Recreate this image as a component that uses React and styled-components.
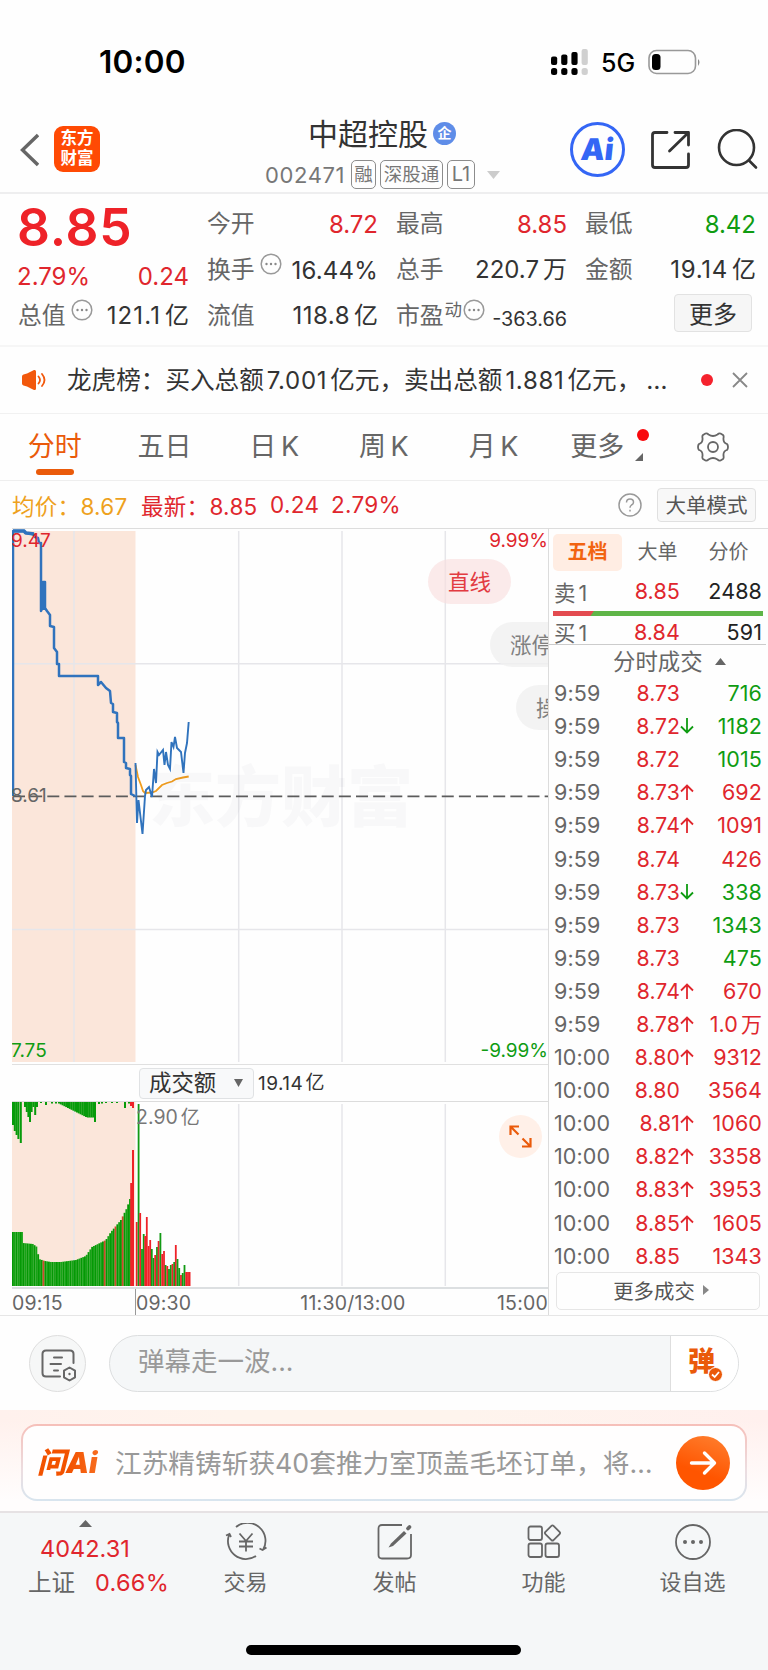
import React from 'react'
import styled, { createGlobalStyle } from 'styled-components'

const RED = '#e0262d';
const GREEN = '#0f9c12';
const GREY = '#666666';
const DARK = '#333333';
const ORANGE = '#ea5a0a';

const GlobalStyle = createGlobalStyle`
  * {
    box-sizing: border-box;
  }
  body {
    margin: 0;
    background: #ffffff;
    font-family: Inter, 'Noto Sans CJK SC', sans-serif;
    color: ${DARK};
  }
  svg {
    display: block;
    flex: none;
  }
`;

const Page = styled.div`
  width: 768px;
  height: 1670px;
  display: flex;
  flex-direction: column;
  overflow: hidden;
  background: #fefefe;
  white-space: nowrap;
`;

const Txt = styled.span`
  font-size: ${p => p.$size || 24}px;
  line-height: ${p => p.$lh || '1.2'};
  font-weight: ${p => p.$weight || 400};
  color: ${p => p.$color || 'inherit'};
  letter-spacing: ${p => p.$ls || 0}px;
  margin-left: ${p => p.$ml || 0}px;
`;

/* status bar */
const StatusBar = styled.div`
  height: 107px;
  padding: 16px 67px 0 99px;
  display: flex;
  align-items: center;
  justify-content: space-between;
  color: #000000;
`;
const StatusIcons = styled.div`
  display: flex;
  align-items: center;
`;
const FiveG = styled.span`
  font-size: 25px;
  font-weight: 500;
  margin: 2px 12px 0 13px;
  width: 35px;
`;

/* title bar */
const Header = styled.div`
  height: 87px;
  padding: 0 10px 0 19px;
  display: flex;
  align-items: center;
  border-bottom: 2px solid #eeeeef;
`;
const Logo = styled.div`
  width: 46px;
  height: 46px;
  margin: 0 0 1px 15px;
  padding-top: 3px;
  border-radius: 9px;
  background: #ff4a04;
  color: #ffffff;
  font-size: 16.5px;
  font-weight: 700;
  line-height: 19.5px;
  text-align: center;
`;
const Titles = styled.div`
  width: 240px;
  margin-left: 165px;
  height: 80px;
`;
const NameRow = styled.div`
  display: flex;
  align-items: center;
  height: 36px;
  margin-top: 6px;
  padding-left: 43px;
  font-size: 30px;
  line-height: 36px;
`;
const Badge = styled.span`
  width: 23px;
  height: 23px;
  margin-left: 5px;
  border-radius: 50%;
  background: #5f8de8;
  color: #ffffff;
  font-size: 14px;
  font-weight: 700;
  line-height: 22px;
  text-align: center;
`;
const CodeRow = styled.div`
  display: flex;
  align-items: center;
  height: 30px;
  margin-top: 8px;
  color: #777777;
  svg {
    margin-left: 8px;
  }
`;
const Code = styled.span`
  width: 86px;
  font-size: 22px;
  letter-spacing: 0.6px;
`;
const Tag = styled.span`
  height: 29px;
  width: ${p => p.$w}px;
  margin-right: 4px;
  border: 1.5px solid #8c8c8c;
  border-radius: 5px;
  font-size: ${p => p.$size || 18.5}px;
  line-height: 26px;
  text-align: center;
`;
const AiLogo = styled.div`
  width: 55px;
  height: 55px;
  margin: 0 25px 0 65px;
  border: 3px solid #3466f5;
  border-radius: 50%;
  color: #3466f5;
  font-size: 30px;
  font-weight: 900;
  line-height: 49px;
  text-align: center;
  span {
    display: block;
    transform: skewX(-6deg);
  }
`;

/* quote numbers */
const Quotes = styled.div`
  height: 153px;
  padding: 7px 13px 0 18px;
  display: grid;
  grid-template-columns: repeat(4, 170px);
  column-gap: 19px;
  border-bottom: 2px solid #f6f6f6;
`;
const QuoteCol = styled.div`
  display: flex;
  flex-direction: column;
`;
const QuoteRow = styled.div`
  height: 46px;
  display: flex;
  align-items: center;
  justify-content: ${p => p.$end ? 'flex-end' : 'space-between'};
`;
const Label = styled.span`
  display: flex;
  align-items: flex-start;
  color: ${GREY};
  font-size: 23.8px;
  line-height: 34px;
`;
const Super = styled.sup`
  font-size: 17.5px;
  line-height: 20px;
  margin: 1px 1px 0 1px;
`;
const Value = styled.span`
  color: ${p => p.$color || DARK};
  font-size: ${p => p.$size || 24}px;
  letter-spacing: ${p => p.$ls || 0}px;
  padding-top: ${p => p.$drop || 0}px;
  margin-right: -1px;
`;
const BigPrice = styled.div`
  height: 55px;
  margin-left: -1px;
  color: #ee2228;
  font-size: 51.5px;
  font-weight: 600;
  line-height: 53px;
  letter-spacing: 0.8px;
`;
const ChangeRow = styled.div`
  height: 37px;
  margin-left: -1px;
  padding-top: 3px;
  display: flex;
  justify-content: space-between;
  align-items: center;
`;
const MoreButton = styled.button`
  width: 78px;
  height: 38px;
  margin: 0 3px 6px 0;
  padding: 0 0 3px;
  border: 1.5px solid #e2e2e2;
  border-radius: 4px;
  background: #f6f6f6;
  color: ${DARK};
  font: 24px Inter, 'Noto Sans CJK SC', sans-serif;
`;

/* news strip */
const News = styled.div`
  height: 67px;
  padding: 0 20px 0 21px;
  display: flex;
  align-items: center;
  border-bottom: 1px solid #f1f1f1;
`;
const NewsText = styled.div`
  width: 612px;
  margin-left: 20px;
  font-size: 24.6px;
  line-height: 34px;
  b {
    font-weight: 400;
    margin: 0 3px;
    font-size: 24px;
    letter-spacing: 0.7px;
  }
  i {
    font-style: normal;
    letter-spacing: 1px;
    margin-left: 5px;
  }
`;
const Dot = styled.i`
  display: block;
  width: 12px;
  height: 12px;
  border-radius: 50%;
  background: #f5222d;
`;

/* period tabs */
const Tabs = styled.div`
  height: 67px;
  display: grid;
  grid-template-columns: repeat(6, 109.7px) 1fr;
  border-bottom: 1px solid #eeeeee;
`;
const Tab = styled.div`
  position: relative;
  display: flex;
  justify-content: center;
  padding: 14px ${p => p.$shift || 0}px 0 0;
  color: ${p => p.$active ? ORANGE : GREY};
  font-size: 27px;
  line-height: 38px;
  word-spacing: -3px;
  &::after {
    content: '';
    display: ${p => p.$active ? 'block' : 'none'};
    position: absolute;
    bottom: 5px;
    left: 36px;
    width: 38px;
    height: 6px;
    border-radius: 3px;
    background: ${ORANGE};
  }
`;
const TabMark = styled.span`
  position: absolute;
  left: 87px;
  top: 15px;
`;
const GearCell = styled.div`
  display: flex;
  align-items: center;
  justify-content: center;
`;

/* average / last price line */
const Info = styled.div`
  height: 47px;
  padding: 0 12px;
  display: flex;
  align-items: center;
  font-size: 22.5px;
  letter-spacing: 0.3px;
  color: ${RED};
`;
const Avg = styled.span`
  color: #eea11d;
  width: 129px;
`;
const InfoText = styled.span`
  width: ${p => p.$w}px;
`;
const Spacer = styled.span`
  flex: 1;
`;
const ModeButton = styled.button`
  width: 99px;
  height: 34px;
  margin-left: 15px;
  padding: 0 0 2px;
  border: 1.5px solid #e0e0e0;
  border-radius: 4px;
  background: #f8f8f8;
  color: #555555;
  font: 20.5px 'Noto Sans CJK SC', sans-serif;
`;

/* chart + order book */
const Body = styled.div`
  height: 788px;
  display: flex;
  border-bottom: 1px solid #e6e6e6;
`;
const ChartSide = styled.div`
  width: 549px;
  padding-left: 12px;
  border-right: 1px solid #dcdcdc;
`;
const PriceChart = styled.div`
  position: relative;
  height: 536px;
  border-top: 1px solid #dddddd;
  overflow: hidden;
`;
const ChartLabel = styled.span`
  position: absolute;
  ${p => p.$right ? 'right: 0' : 'left: -1px'};
  top: ${p => p.$top}px;
  color: ${p => p.$color};
  font-size: 19px;
  line-height: 22px;
`;
const Watermark = styled.span`
  position: absolute;
  left: 137px;
  top: 223px;
  color: rgba(90, 90, 120, 0.04);
  font-size: 66px;
  font-weight: 900;
  line-height: 90px;
`;
const Pill = styled.span`
  position: absolute;
  left: ${p => p.$x}px;
  top: ${p => p.$y}px;
  height: 45px;
  padding: 0 20px;
  border-radius: 23px;
  background: ${p => p.$hot ? 'rgba(249, 222, 222, 0.65)' : 'rgba(240, 240, 240, 0.8)'};
  color: ${p => p.$hot ? '#e23b41' : '#808080'};
  font-size: 21.5px;
  line-height: 46px;
`;
const VolumeHead = styled.div`
  height: 38px;
  display: flex;
  align-items: center;
  padding-left: 127px;
  border-top: 1px solid #e0e0e0;
  border-bottom: 1.5px solid #dcdcdc;
  font-size: 19px;
  letter-spacing: 0.5px;
`;
const VolumeButton = styled.div`
  width: 115px;
  height: 31px;
  margin-right: 4px;
  padding: 0 10px 1px 9px;
  display: flex;
  align-items: center;
  justify-content: space-between;
  border: 1.5px solid #e0e2e4;
  border-radius: 4px;
  background: #f8f9fa;
  font-size: 22.4px;
  line-height: 28px;
  letter-spacing: 0;
`;
const VolumeChart = styled.div`
  position: relative;
  height: 185px;
`;
const VolumeMax = styled.span`
  position: absolute;
  left: 124px;
  top: 2px;
  color: #777777;
  font-size: 19.5px;
  line-height: 26px;
`;
const Expand = styled.div`
  position: absolute;
  right: 6px;
  top: 13px;
  width: 43px;
  height: 43px;
  padding: 10px;
  border-radius: 50%;
  background: #fff0e8;
`;
const TimeAxis = styled.div`
  height: 28px;
  display: flex;
  border-top: 2px solid #dcdfe1;
  color: ${GREY};
  font-size: 19.5px;
  line-height: 28px;
  letter-spacing: 0.2px;
`;
const Tick = styled.span`
  width: ${p => p.$w}px;
  text-align: ${p => p.$align || 'left'};
  border-left: ${p => p.$mark ? '1px solid #999999' : 'none'};
`;

const Book = styled.div`
  flex: 1;
  padding: 5px 7px 0 4px;
  border-top: 1px solid #dddddd;
  display: flex;
  flex-direction: column;
`;
const BookTabs = styled.div`
  display: flex;
  height: 37px;
  margin-right: -2px;
`;
const BookTab = styled.span`
  width: ${p => p.$active ? 69 : 71}px;
  text-align: center;
  border-radius: 5px;
  font-size: 20px;
  line-height: 36px;
  font-weight: ${p => p.$active ? 700 : 400};
  color: ${p => p.$active ? '#f26411' : GREY};
  background: ${p => p.$active ? '#ffede3' : 'none'};
`;
const BookRow = styled.div`
  height: ${p => p.$h}px;
  padding: 0 1px ${p => p.$up || 0}px 1px;
  display: grid;
  grid-template-columns: 69px 57px 14px 1fr;
  align-items: center;
  flex: none;
  font-size: 21.5px;
  color: ${GREY};
  letter-spacing: 0.1px;
`;
const Cell = styled.span`
  text-align: right;
  white-space: nowrap;
  justify-self: end;
  color: ${p => p.$color};
  font-size: ${p => p.$size || 21.5}px;
`;
const Ratio = styled.div`
  width: 210px;
  height: 5px;
  flex: none;
  background: linear-gradient(125deg, #e34b50 0 33px, #5fb548 34px);
`;
const DealTitle = styled.div`
  height: 33px;
  margin: 0 -3px 0 -4px;
  padding: 1px 0 0 64px;
  display: flex;
  align-items: center;
  gap: 12px;
  flex: none;
  border-top: 1.5px solid #cccccc;
  color: ${GREY};
  font-size: 22.4px;
  line-height: 31px;
`;
const MoreDeals = styled.div`
  width: 204px;
  height: 38px;
  margin: -1px 0 0 3px;
  padding: 0 0 2px 6px;
  display: flex;
  align-items: center;
  justify-content: center;
  gap: 8px;
  border: 1.5px solid #e6e6e6;
  border-radius: 5px;
  color: #555555;
  font-size: 20.4px;
`;

/* comment bar */
const CommentBar = styled.div`
  height: 94px;
  padding: 1px 29px 0;
  display: flex;
  align-items: center;
  justify-content: space-between;
`;
const RoundButton = styled.div`
  width: 57px;
  height: 57px;
  padding: 11px;
  border: 1px solid #dedede;
  border-radius: 50%;
  background: #f6f7f7;
`;
const Input = styled.div`
  width: 630px;
  height: 57px;
  display: flex;
  overflow: hidden;
  border: 1px solid #dcdedf;
  border-radius: 29px;
  background: #f5f7f8;
`;
const Placeholder = styled.span`
  flex: 1;
  padding-left: 28px;
  color: #999999;
  font-size: 26.5px;
  line-height: 51px;
`;
const Danmu = styled.span`
  position: relative;
  width: 68px;
  padding-left: 17px;
  border-left: 1.5px solid #dedede;
  background: #ffffff;
  color: ${ORANGE};
  font-size: 27px;
  font-weight: 900;
  line-height: 52px;
  svg {
    position: absolute;
    left: 37px;
    top: 31px;
  }
`;

/* ask ai */
const AskArea = styled.div`
  height: 101px;
  padding: 14px 21px 0;
  background: linear-gradient(180deg, rgba(255, 254, 254, 0) 10%, #fffdfd 90%),
    linear-gradient(90deg, #fff1ed, #fef4ed 30%, #fef4ed 60%, #fff0ee);
`;
const AskCard = styled.div`
  height: 77px;
  padding: 0 15px 0 14px;
  display: flex;
  align-items: center;
  border: 2px solid transparent;
  border-radius: 16px;
  background: linear-gradient(#fffefe, #fffefe) padding-box,
    linear-gradient(180deg, #f6bfb9, #ecdde0 60%, #d8e5ef) border-box;
`;
const AskLogo = styled.span`
  width: 78px;
  font-size: 29px;
  font-weight: 900;
  font-style: italic;
  line-height: 40px;
  background: linear-gradient(90deg, #f25200 40%, #fb7b2f);
  -webkit-background-clip: text;
  color: transparent;
`;
const AskText = styled.span`
  flex: 1;
  color: #999999;
  font-size: 26.7px;
  line-height: 40px;
`;
const GoButton = styled.span`
  width: 54px;
  height: 54px;
  padding: 13px;
  border-radius: 50%;
  background: linear-gradient(200deg, #ff8131, #ff5500 65%);
`;

/* bottom navigation */
const BottomNav = styled.div`
  flex: 1;
  border-top: 2px solid #e6e2e4;
  background: #f5f7f8;
`;
const NavRow = styled.div`
  height: 133px;
  display: grid;
  grid-template-columns: 171px repeat(4, 149px);
`;
const IndexCell = styled.div`
  padding-top: 7px;
  color: ${RED};
  font-size: 23.5px;
  svg {
    margin-left: 79px;
  }
`;
const IndexValue = styled.div`
  margin: 8px 0 0 40px;
  line-height: 28px;
`;
const IndexRow = styled.div`
  display: flex;
  gap: 20px;
  padding-left: 28px;
  line-height: 40px;
  letter-spacing: 0.3px;
`;
const NavItem = styled.div`
  padding-top: 10px;
  display: flex;
  flex-direction: column;
  align-items: center;
  color: ${GREY};
  font-size: 22px;
  line-height: 32px;
  svg {
    margin-bottom: 5px;
  }
`;
const HomeBar = styled.div`
  width: 275px;
  height: 10px;
  margin: -1px 0 0 246px;
  border-radius: 5px;
  background: #000000;
`;

const Unit = ({ children }) => <Txt $size={24} $ml={4}>{children}</Txt>

function DotsIcon() {
    return (
        <svg width="22" height="22" viewBox="0 0 22 22">
            <circle cx="11" cy="11" r="9.8" fill="none" stroke="#999" strokeWidth="1.5" />
            <circle cx="6.5" cy="11" r="1.2" fill="#888" />
            <circle cx="11" cy="11" r="1.2" fill="#888" />
            <circle cx="15.5" cy="11" r="1.2" fill="#888" />
        </svg>
    )
}

const priceLine = '13,796 13,531 24,531 25,533 33,534 35,537 38,538 39,543 41,543 41,611 43,607 43,582 45,582 45,608 47,611 50,615 50,626 54,627 54,648 57,652 57,664 59,664 59,676 98,676 98,685 101,682 106,688 110,691 111,703 113,704 113,712 117,713 117,722 118,723 118,738 124,738 124,762 126,763 126,768 130,769 130,775 131,776 131,794 135,796'
const openLine = '135.5,763 137,823 138.5,800 142.5,834 145,796 146,790 149,787 152,797 154,769 156,783 157.5,752 159,755 163,750 164.5,765 166,752 168,765 170,769 171.5,742 173.5,747 175,737 177,748 181,752 183.5,773 185,753 187,743 188.7,722'
const avgLine = '135.5,765 138,777 141,785 143,791 145,793 152,792.5 156,791 162,785 167,783 172,781.5 176,779 183,777.5 188.7,776.5'

// [x, top] outline of the call-auction turnover
const auction = [[12, 1232], [21, 1232], [22, 1243], [32, 1244], [36, 1247], [38, 1259], [44, 1261], [50, 1262], [60, 1262], [75, 1260], [85, 1256], [91, 1247], [105, 1240], [110, 1232], [120, 1220], [126, 1208], [130, 1196]]
const auctionTop = [[13, 1125], [14.8, 1131], [16.6, 1135], [18.4, 1139], [20.8, 1143], [25, 1107], [26.8, 1112], [28.4, 1117], [30, 1122], [31.6, 1112], [33.4, 1107], [35.2, 1115], [37, 1107], [41, 1103], [46, 1105], [52, 1103.5], [56, 1103.5], [95, 1122], [99, 1104], [102, 1103.5], [106, 1103], [112, 1103], [117, 1103], [125, 1108], [129, 1103.5]]
const trades = [[136.7, 1222, 1], [138.6, 1104, 0], [140.2, 1213, 1], [142, 1249, 0], [143.7, 1234, 0], [145.2, 1236, 1], [146.8, 1217, 1], [148.6, 1246, 1], [150.2, 1240, 1], [151.8, 1249, 0], [153.5, 1258, 0], [155.2, 1255, 1], [157, 1247, 0], [158.6, 1241, 1], [160.4, 1233, 0], [162.2, 1254, 1], [164, 1251, 1], [165.6, 1265, 0], [167.3, 1266, 1], [169, 1269, 0], [170.8, 1265, 0], [172.5, 1264, 1], [174.2, 1262, 0], [175.8, 1245, 1], [177.5, 1259, 0], [179.2, 1268, 0], [181, 1275, 1], [182.7, 1273, 0], [184.5, 1265, 0], [186.2, 1272, 1], [188, 1272, 1], [189.6, 1272, 1]]
const redAuction = [17, 51, 57, 61]

function topAt(x) {
    const i = auction.findIndex(p => p[0] > x)
    if (i < 1) return 1196
    const [a, b] = [auction[i - 1], auction[i]]
    return a[1] + ((b[1] - a[1]) * (x - a[0])) / (b[0] - a[0])
}

function Grid({ top, bottom }) {
    return (
        <g stroke="#e6e6ea" strokeWidth="1.5">
            {[74, 238.7, 342, 445.3].map(x => <line key={x} x1={x} x2={x} y1={top} y2={bottom} />)}
        </g>
    )
}

function PriceSvg() {
    return (
        <svg width="536" height="535" viewBox="12 529 536 535">
            <rect x="12" y="531" width="123.5" height="531" fill="#fbe6da" />
            <Grid top={531} bottom={1062} />
            <path d="M12 663.7H548M12 929.5H548" stroke="#e6e6ea" strokeWidth="1.5" />
            <path d="M12 796.3H548" stroke="#5c5c5c" strokeWidth="1.7" strokeDasharray="12 5.15" strokeDashoffset="-1" />
            <polyline points={avgLine} fill="none" stroke="#f09c1c" strokeWidth="1.8" />
            <polyline points={priceLine} fill="none" stroke="#3073bd" strokeWidth="2.5" strokeLinejoin="round" />
            <polyline points="13,531 24,531 26,533 34,534" fill="none" stroke="#3073bd" strokeWidth="3.4" />
            <path d="M43.5 583V610" stroke="#3073bd" strokeWidth="3.4" />
            <polyline points={openLine} fill="none" stroke="#3073bd" strokeWidth="1.9" />
        </svg>
    )
}

function VolumeSvg() {
    const bars = Array.from({ length: 66 }, (_, i) => 12 + i * 1.8)
    const hanging = Array.from({ length: 20 }, (_, i) => [59 + i * 1.8, 1103.5 + Math.min(14, i * 0.9)])
    return (
        <svg width="536" height="185" viewBox="12 1102 536 185">
            <rect x="12" y="1102" width="123.5" height="184" fill="#fbe6da" />
            <Grid top={1104} bottom={1286} />
            {bars.map((x, i) => (
                <rect key={x} x={x} y={topAt(x)} width="1.9" height={1286 - topAt(x)} fill={redAuction.includes(i) ? '#cf4a2c' : i % 2 ? '#16a316' : '#059805'} />
            ))}
            {[...auctionTop, ...hanging].map(([x, y]) => (
                <rect key={x} x={x - 1} y="1102" width="2" height={y - 1102} fill="#079b0b" />
            ))}
            <path d="M130.2 1183h2v103h-2zM132 1150h2v136h-2zM130 1102h2v4h-2zM132 1102h2v6h-2z" fill="#ee2228" />
            {trades.map(([x, y, up]) => (
                <rect key={x} x={x - 0.9} y={y} width="1.8" height={1286 - y} fill={up ? '#ee2228' : '#129a14'} />
            ))}
        </svg>
    )
}

const deals = [
    ['9:59', '8.73', '', '716', GREEN],
    ['9:59', '8.72', '↓', '1182', GREEN],
    ['9:59', '8.72', '', '1015', GREEN],
    ['9:59', '8.73', '↑', '692', RED],
    ['9:59', '8.74', '↑', '1091', RED],
    ['9:59', '8.74', '', '426', RED],
    ['9:59', '8.73', '↓', '338', GREEN],
    ['9:59', '8.73', '', '1343', GREEN],
    ['9:59', '8.73', '', '475', GREEN],
    ['9:59', '8.74', '↑', '670', RED],
    ['9:59', '8.78', '↑', <>1.0<Txt $size={21} $lh="1" $ml={3}>万</Txt></>, RED],
    ['10:00', '8.80', '↑', '9312', RED],
    ['10:00', '8.80', '', '3564', RED],
    ['10:00', '8.81', '↑', '1060', RED],
    ['10:00', '8.82', '↑', '3358', RED],
    ['10:00', '8.83', '↑', '3953', RED],
    ['10:00', '8.85', '↑', '1605', RED],
    ['10:00', '8.85', '', '1343', RED],
]

function Arrow({ dir }) {
    if (!dir) return <span />
    const up = dir === '↑'
    return (
        <svg width="14" height="18" viewBox="0 0 14 18" fill="none" stroke={up ? RED : GREEN} strokeWidth="1.8">
            <path d={up ? 'M7 17V3M1 8.5L7 2.5L13 8.5' : 'M7 1V15M1 9.5L7 15.5L13 9.5'} />
        </svg>
    )
}

function TopBar() {
    return (
        <>
            <StatusBar>
                <Txt $size={31.5} $weight={600} $ls={0.2}>10:00</Txt>
                <StatusIcons>
                    <svg width="38" height="28" viewBox="550 47 38 28">
                        {[[551, 55.5], [561.2, 53.5], [571.4, 51]].map(([x, y]) => (
                            <g key={x}>
                                <rect x={x} y={y} width="6.2" height={64 - y} rx="2" />
                                <rect x={x} y="67" width="6.2" height="7" rx="2.5" />
                            </g>
                        ))}
                        <rect x="581.6" y="48" width="6.2" height="16" rx="2" fill="#d0d0d0" />
                        <rect x="581.6" y="67" width="6.2" height="7" rx="2.5" fill="#d0d0d0" />
                    </svg>
                    <FiveG>5G</FiveG>
                    <svg width="53" height="26" viewBox="648 48 53 26">
                        <rect x="649" y="49.5" width="46.5" height="23" rx="7.5" fill="none" stroke="#999" strokeWidth="1.6" />
                        <rect x="652" y="53" width="8.5" height="16" rx="3.5" />
                        <path d="M698 58q3 3 0 7z" fill="#888" />
                    </svg>
                </StatusIcons>
            </StatusBar>
            <Header>
                <svg width="20" height="34" viewBox="0 0 20 34" fill="none" stroke="#666" strokeWidth="3.4">
                    <path d="M19 2L3.5 17L19 32" />
                </svg>
                <Logo>东方<br />财富</Logo>
                <Titles>
                    <NameRow>中超控股<Badge>企</Badge></NameRow>
                    <CodeRow>
                        <Code>002471</Code>
                        <Tag $w={25}>融</Tag>
                        <Tag $w={63}>深股通</Tag>
                        <Tag $w={28} $size={20}>L1</Tag>
                        <svg width="13" height="8" viewBox="0 0 13 8"><path d="M0 0h13L6.5 8z" fill="#ccc" /></svg>
                    </CodeRow>
                </Titles>
                <AiLogo><span>Ai</span></AiLogo>
                <svg width="40" height="40" viewBox="650 130 40 40" fill="none" stroke="#333" strokeWidth="2.8" strokeLinecap="round" strokeLinejoin="round">
                    <path d="M667 132.5H655q-2.5 0-2.5 2.5V165q0 2.5 2.5 2.5H686q2.5 0 2.5-2.5V154M675 132.5H688.5V145M688 133L669.500 151" />
                </svg>
                <Spacer />
                <svg width="41" height="42" viewBox="716 129 41 42" fill="none" stroke="#333" strokeWidth="2.6" strokeLinecap="round">
                    <circle cx="735.5" cy="147.5" r="17.5" />
                    <path d="M748 160.5L755 167.5" />
                </svg>
            </Header>
        </>
    )
}

function QuotePanel() {
    return (
        <Quotes>
            <QuoteCol>
                <BigPrice>8.85</BigPrice>
                <ChangeRow>
                    <Value $color={RED}>2.79%</Value>
                    <Value $color={RED}>0.24</Value>
                </ChangeRow>
                <QuoteRow>
                    <Label>总值<Txt $ml={5}><DotsIcon /></Txt></Label>
                    <Value $ls={1.1}>121.1<Unit>亿</Unit></Value>
                </QuoteRow>
            </QuoteCol>
            <QuoteCol>
                <QuoteRow><Label>今开</Label><Value $color={RED}>8.72</Value></QuoteRow>
                <QuoteRow><Label>换手<Txt $ml={5}><DotsIcon /></Txt></Label><Value $ls={0.2}>16.44%</Value></QuoteRow>
                <QuoteRow><Label>流值</Label><Value $ls={0.5}>118.8<Unit>亿</Unit></Value></QuoteRow>
            </QuoteCol>
            <QuoteCol>
                <QuoteRow><Label>最高</Label><Value $color={RED}>8.85</Value></QuoteRow>
                <QuoteRow><Label>总手</Label><Value>220.7<Unit>万</Unit></Value></QuoteRow>
                <QuoteRow><Label>市盈<Super>动</Super><DotsIcon /></Label><Value $size={19.8} $drop={5}>-363.66</Value></QuoteRow>
            </QuoteCol>
            <QuoteCol>
                <QuoteRow><Label>最低</Label><Value $color={GREEN}>8.42</Value></QuoteRow>
                <QuoteRow><Label>金额</Label><Value $ls={0.7}>19.14<Unit>亿</Unit></Value></QuoteRow>
                <QuoteRow $end><MoreButton>更多</MoreButton></QuoteRow>
            </QuoteCol>
        </Quotes>
    )
}

function NewsStrip() {
    return (
        <News>
            <svg width="26" height="22" viewBox="0 0 26 22" fill="none" stroke="#f2580c" strokeWidth="1.8" strokeLinecap="round">
                <path d="M1 7.5Q1 6 2.5 5.5L6 4.5L13 1Q15 .5 15 2.5V19.5Q15 21.500 13 21L6 17.500L2.500 16.500Q1 16 1 14.500z" fill="#f2580c" stroke="none" />
                <path d="M17.5 7.500q3 3.500 0 7M21 5q5 6 0 12" />
            </svg>
            <NewsText>龙虎榜：买入总额<b>7.001</b>亿元，卖出总额<b>1.881</b>亿元，<i>…</i></NewsText>
            <Txt $ml={22}><Dot /></Txt>
            <Spacer />
            <svg width="16" height="16" viewBox="0 0 16 16" stroke="#888" strokeWidth="1.8"><path d="M1 1L15 15M15 1L1 15" /></svg>
        </News>
    )
}

function PeriodTabs() {
    return (
        <Tabs>
            <Tab $active>分时</Tab>
            <Tab>五日</Tab>
            <Tab>日 K</Tab>
            <Tab>周 K</Tab>
            <Tab>月 K</Tab>
            <Tab $shift={12}>
                更多
                <TabMark>
                    <svg width="14" height="32" viewBox="0 0 14 32">
                        <circle cx="8" cy="6" r="6" fill="#f8080c" />
                        <path d="M8 24V32H0z" fill="#666" />
                    </svg>
                </TabMark>
            </Tab>
            <GearCell>
                <svg width="32" height="30" viewBox="0 0 32 30" fill="none" stroke="#666" strokeWidth="1.8" strokeLinejoin="round">
                    <path d="M8.5 1.5Q10 1 11.5 2.5Q16 5.5 20.5 2.5Q22 1 23.5 1.5L26 3Q27 4 26.5 6Q26 11 30 12Q31 13 31 15T30 18Q26 19 26.5 24Q27 26 26 27L23.5 28.5Q22 29 20.5 27.5Q16 24.5 11.5 27.5Q10 29 8.5 28.5L6 27Q5 26 5.5 24Q6 19 2 18Q1 17 1 15T2 12Q6 11 5.5 6Q5 4 6 3z" />
                    <circle cx="16" cy="15" r="5" />
                </svg>
            </GearCell>
        </Tabs>
    )
}

function BookPanel() {
    return (
        <Book>
            <BookTabs>
                <BookTab $active>五档</BookTab>
                <BookTab>大单</BookTab>
                <BookTab>分价</BookTab>
            </BookTabs>
            <BookRow $h={40}><span>卖<Txt $size={21.5} $ml={3}>1</Txt></span><Cell $color={RED}>8.85</Cell><span /><Cell $color="#222">2488</Cell></BookRow>
            <Ratio />
            <BookRow $h={28} $up={1}><span>买<Txt $size={21.5} $ml={3}>1</Txt></span><Cell $color={RED}>8.84</Cell><span /><Cell $color="#222">591</Cell></BookRow>
            <DealTitle>
                分时成交
                <svg width="11" height="7" viewBox="0 0 11 7"><path d="M0 7h11L5.5 0z" fill="#666" /></svg>
            </DealTitle>
            {deals.map(([time, price, dir, count, color], i) => (
                <BookRow key={i} $h={33.1} $up={1}>
                    <span>{time}</span>
                    <Cell $color={RED} $size={21.2}>{price}</Cell>
                    <Arrow dir={dir} />
                    <Cell $color={color}>{count}</Cell>
                </BookRow>
            ))}
            <MoreDeals>
                更多成交
                <svg width="6" height="10" viewBox="0 0 6 10"><path d="M0 0v10L6 5z" fill="#888" /></svg>
            </MoreDeals>
        </Book>
    )
}

function Charts() {
    return (
        <ChartSide>
            <PriceChart>
                <Watermark>东方财富</Watermark>
                <PriceSvg />
                <ChartLabel $top={1} $color={RED}>9.47</ChartLabel>
                <ChartLabel $top={1} $color={RED} $right>9.99%</ChartLabel>
                <ChartLabel $top={256} $color="#666">8.61</ChartLabel>
                <ChartLabel $top={511} $color={GREEN}>7.75</ChartLabel>
                <ChartLabel $top={511} $color={GREEN} $right>-9.99%</ChartLabel>
                <Pill $x={416} $y={30} $hot>直线</Pill>
                <Pill $x={478} $y={93}>涨停</Pill>
                <Pill $x={504} $y={156}>操</Pill>
            </PriceChart>
            <VolumeHead>
                <VolumeButton>
                    成交额
                    <svg width="9" height="8" viewBox="0 0 9 8"><path d="M0 0h9L4.5 8z" fill="#666" /></svg>
                </VolumeButton>
                19.14<Txt $size={19} $ml={2}>亿</Txt>
            </VolumeHead>
            <VolumeChart>
                <VolumeSvg />
                <VolumeMax>2.90<Txt $size={19} $ml={3}>亿</Txt></VolumeMax>
                <Expand>
                    <svg width="23" height="23" viewBox="0 0 23 23" fill="none" stroke={ORANGE} strokeWidth="2.2">
                        <path d="M1.5 10V1.5H10M1.5 1.5L9.5 9.5M21.5 13V21.5H13M21.5 21.5L13.5 13.5" />
                    </svg>
                </Expand>
            </VolumeChart>
            <TimeAxis>
                <Tick $w={123}>09:15</Tick>
                <Tick $w={127} $mark>09:30</Tick>
                <Tick $w={182} $align="center">11:30/13:00</Tick>
                <Tick $w={104} $align="right">15:00</Tick>
            </TimeAxis>
        </ChartSide>
    )
}

function AskBar() {
    return (
        <AskArea>
            <AskCard>
                <AskLogo>问Ai</AskLogo>
                <AskText>江苏精铸斩获40套推力室顶盖毛坯订单，将…</AskText>
                <GoButton>
                    <svg width="28" height="28" viewBox="0 0 28 28" fill="none" stroke="#fff" strokeWidth="3.4" strokeLinecap="round" strokeLinejoin="round">
                        <path d="M2.5 14H25M15.5 4L25.5 14L15.5 24" />
                    </svg>
                </GoButton>
            </AskCard>
        </AskArea>
    )
}

function Footer() {
    return (
        <BottomNav>
            <NavRow>
                <IndexCell>
                    <svg width="13" height="7" viewBox="0 0 13 7"><path d="M0 7h13L6.5 0z" fill="#666" /></svg>
                    <IndexValue>4042.31</IndexValue>
                    <IndexRow><Txt $color={GREY} $size={23.5} $lh="40px">上证</Txt>0.66%</IndexRow>
                </IndexCell>
                <NavItem>
                    <svg width="42" height="38" viewBox="0 0 42 38" fill="none" stroke="#666" strokeWidth="1.8">
                        <path d="M11 4A18 18 0 0 1 38 27M41.5 24.5L37.500 27L34.500 25.500M31 33A18 18 0 0 1 4 12M1 12.5L4.500 11L6 14" />
                        <path d="M14.5 10.500L21 18L27.500 10.500M21 18V28.500M14 18.500H28M14 23.500H28" />
                    </svg>
                    交易
                </NavItem>
                <NavItem>
                    <svg width="36" height="38" viewBox="0 0 36 38" fill="none" stroke="#666" strokeWidth="1.8">
                        <path d="M25 2H5Q1.5 2 1.5 5.5V32Q1.5 35.5 5 35.5H30Q34 35.5 34 32V11" />
                        <path d="M11.5 24.5L14 20.500L27 8L29.500 10.500L16 23z" fill="#666" stroke="none" />
                        <path d="M31 5.5L32.5 4" strokeWidth="3.8" strokeLinecap="round" />
                    </svg>
                    发帖
                </NavItem>
                <NavItem>
                    <svg width="34" height="38" viewBox="0 0 34 38" fill="none" stroke="#666" strokeWidth="1.8">
                        <rect x="1.5" y="3.5" width="13.5" height="13.5" rx="2" />
                        <rect x="1.5" y="20.5" width="13.5" height="13.5" rx="2" />
                        <rect x="18.5" y="20.5" width="13.5" height="13.5" rx="2" />
                        <rect x="19.7" y="4.2" width="11.5" height="11.5" rx="1.5" transform="rotate(45 25.45 10)" />
                    </svg>
                    功能
                </NavItem>
                <NavItem>
                    <svg width="38" height="38" viewBox="0 0 38 38">
                        <circle cx="19" cy="19" r="17" fill="none" stroke="#666" strokeWidth="1.8" />
                        <circle cx="11" cy="19" r="2" fill="#666" />
                        <circle cx="19" cy="19" r="2" fill="#666" />
                        <circle cx="27" cy="19" r="2" fill="#666" />
                    </svg>
                    设自选
                </NavItem>
            </NavRow>
            <HomeBar />
        </BottomNav>
    )
}

function App() {
    return (
        <Page lang="zh-CN">
            <GlobalStyle />
            <TopBar />
            <QuotePanel />
            <NewsStrip />
            <PeriodTabs />
            <Info>
                <Avg>均价：8.67</Avg>
                <InfoText $w={129}>最新：8.85</InfoText>
                <InfoText $w={61}>0.24</InfoText>
                <InfoText $w={70}>2.79%</InfoText>
                <Spacer />
                <svg width="24" height="24" viewBox="0 0 24 24" fill="none" stroke="#999" strokeWidth="1.5">
                    <circle cx="12" cy="12" r="11" />
                    <path d="M8.5 9.5Q8.5 6 12 6T15.5 9.3Q15.5 11 13.5 12Q12 13 12 14.8M12 16.8V18.5" />
                </svg>
                <ModeButton>大单模式</ModeButton>
            </Info>
            <Body>
                <Charts />
                <BookPanel />
            </Body>
            <CommentBar>
                <RoundButton>
                    <svg width="35" height="35" viewBox="0 0 35 35" fill="none" stroke="#666" strokeWidth="2" strokeLinecap="round">
                        <path d="M19 29.5H5Q1.5 29.5 1.5 26V7Q1.5 3.5 5 3.5H29Q32.5 3.5 32.5 7V16M13 10.5H21M9.5 17H20M13 23.5H17" />
                        <path d="M28.5 20.5L34 23.7V30.3L28.5 33.5L23 30.3V23.7z" strokeLinejoin="round" />
                        <circle cx="28.5" cy="27" r="1.2" fill="#666" stroke="none" />
                    </svg>
                </RoundButton>
                <Input>
                    <Placeholder>弹幕走一波...</Placeholder>
                    <Danmu>
                        弹
                        <svg width="15" height="15" viewBox="0 0 15 15">
                            <circle cx="7.5" cy="7.5" r="7" fill={ORANGE} stroke="#fff" />
                            <path d="M4 7.5L6.7 10L11 5" fill="none" stroke="#fff" strokeWidth="1.8" />
                        </svg>
                    </Danmu>
                </Input>
            </CommentBar>
            <AskBar />
            <Footer />
        </Page>
    )
}

export default App
